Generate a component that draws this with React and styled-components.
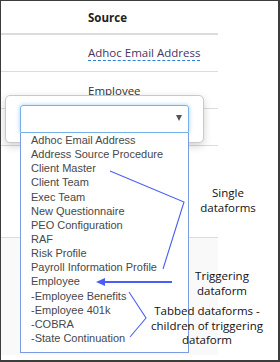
import React from 'react';
import styled, { createGlobalStyle } from 'styled-components';

const GlobalStyle = createGlobalStyle`
  html, body { margin: 0; padding: 0; background: #fff; }
  body { font-family: 'Open Sans', 'Liberation Sans', sans-serif; }
`;

const Frame = styled.div`
  position: relative;
  box-sizing: border-box;
  width: 280px;
  height: 362px;
  border-style: solid;
  border-color: #3d3d3d;
  border-width: 1px 2px 2px 1px;
  background: #fff;
  overflow: hidden;
`;

const Table = styled.div`
  width: 217px;
  display: flex;
  flex-direction: column;
`;

const HeaderRow = styled.div`
  height: 32px;
  border-bottom: 2px solid #dcdcdc;
  display: flex;
  align-items: center;
  padding-left: 87px;
  font-size: 11.5px;
  font-weight: 700;
  color: #222;
`;

const Row = styled.div`
  height: ${(p) => p.$h}px;
  border-bottom: 1px solid #dcdcdc;
  display: flex;
  align-items: center;
  padding-left: 87px;
  font-size: 11.5px;
  color: #333;
`;

const LinkText = styled.span`
  color: #4a3361;
  border-bottom: 1px dashed #2a7fd0;
  line-height: 15px;
`;

const Footer = styled.div`
  height: 117px;
  background: #f9f9f9;
`;

const Card = styled.div`
  position: absolute;
  left: 4px;
  top: 94px;
  box-sizing: border-box;
  width: 199px;
  height: 48px;
  padding: 9px 14px;
  background: #fff;
  border: 1px solid #c9c9c9;
  border-radius: 5px;
  box-shadow: 0 3px 8px rgba(0, 0, 0, 0.18);
`;

const SelectWrap = styled.div`
  position: relative;
`;

const SelectBox = styled.div`
  box-sizing: border-box;
  height: 28px;
  border: 1px solid #74b2ea;
  border-radius: 3px 3px 0 0;
  box-shadow: 0 0 4px rgba(90, 160, 235, 0.55);
  position: relative;
`;

const Caret = styled.span`
  position: absolute;
  right: 6px;
  top: 9px;
  width: 0;
  height: 0;
  border-left: 3.5px solid transparent;
  border-right: 3.5px solid transparent;
  border-top: 6px solid #555;
`;

const List = styled.ul`
  position: absolute;
  left: 0;
  top: 28px;
  box-sizing: border-box;
  width: 169px;
  height: 220px;
  margin: 0;
  padding: 0 0 0 10px;
  list-style: none;
  background: #fff;
  border: 1px solid #7d9be0;
  border-top: none;
`;

const Item = styled.li`
  font-family: 'Liberation Sans', Arial, sans-serif;
  font-size: 11px;
  line-height: 14.14px;
  color: #484848;
  white-space: nowrap;
`;

const Note = styled.div`
  position: absolute;
  left: ${(p) => p.$x}px;
  top: ${(p) => p.$y}px;
  width: 130px;
  margin-left: -65px;
  text-align: center;
  font-size: 11.5px;
  line-height: ${(p) => p.$lh || 15}px;
  color: #111;
`;

const Overlay = styled.svg`
  position: absolute;
  left: 0;
  top: 0;
  pointer-events: none;
`;

const items = [
  'Adhoc Email Address',
  'Address Source Procedure',
  'Client Master',
  'Client Team',
  'Exec Team',
  'New Questionnaire',
  'PEO Configuration',
  'RAF',
  'Risk Profile',
  'Payroll Information Profile',
  'Employee',
  '-Employee Benefits',
  '-Employee 401k',
  '-COBRA',
  '-State Continuation',
];

export default function App() {
  return (
    <>
      <GlobalStyle />
      <Frame>
        <Table>
          <HeaderRow>Source</HeaderRow>
          <Row $h={36}>
            <LinkText>Adhoc Email Address</LinkText>
          </Row>
          <Row $h={36}>Employee</Row>
          <Row $h={36} />
          <Row $h={91} />
          <Footer />
        </Table>

        <Card>
          <SelectWrap>
            <SelectBox>
              <Caret />
            </SelectBox>
            <List>
              {items.map((it) => (
                <Item key={it}>{it}</Item>
              ))}
            </List>
          </SelectWrap>
        </Card>

        <Note $x={227} $y={184}>
          Single
          <br />
          dataforms
        </Note>
        <Note $x={221} $y={267}>
          Triggering
          <br />
          dataform
        </Note>
        <Note $x={206} $y={303} $lh={14.5}>
          Tabbed dataforms -
          <br />
          children of triggering
          <br />
          dataform
        </Note>

        <Overlay width="278" height="360" viewBox="0 0 278 360">
          <g stroke="#4b5ff2" fill="none" strokeWidth="1.1">
            <polyline points="109,170 183,201 162,268" />
            <polyline points="128,291 145,317 129,336" />
          </g>
          <line x1="171" y1="281" x2="102" y2="281" stroke="#4b5ff2" strokeWidth="2" />
          <polygon points="95,281 104,277 104,285" fill="#4b5ff2" />
        </Overlay>
      </Frame>
    </>
  );
}
